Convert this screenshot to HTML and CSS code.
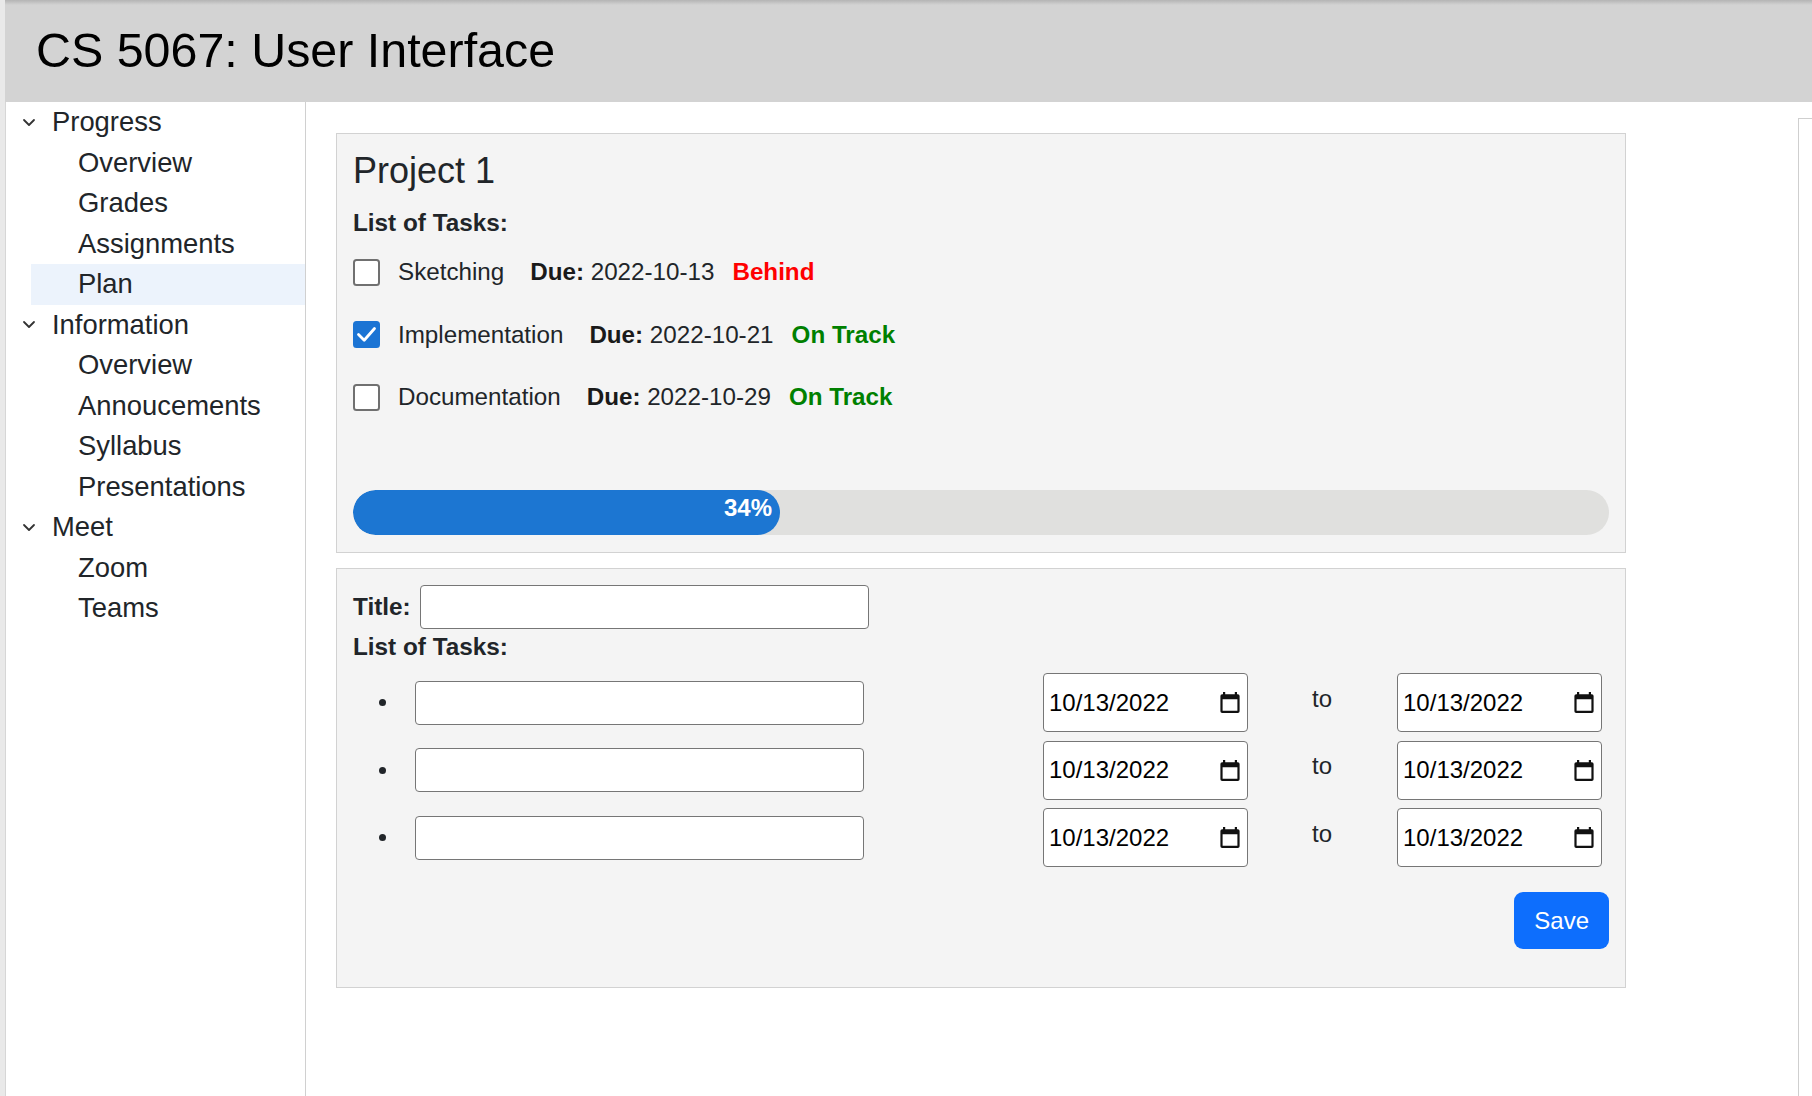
FILE: index.html
```html
<!DOCTYPE html>
<html lang="en">
<head>
<meta charset="utf-8">
<title>CS 5067: User Interface</title>
<link rel="stylesheet" href="styles.css">
</head>
<body>
<div class="app">
  <header class="topbar">
    <h1 class="site-title">CS 5067: User Interface</h1>
  </header>
  <div class="layout">
    <nav class="sidebar">
      <ul class="nav">
        <li class="group">
          <div class="group-head">
            <svg class="chev" width="14" height="9" viewBox="0 0 14 9"><polyline points="2,2 7,7 12,2" fill="none" stroke="#333" stroke-width="1.8" stroke-linecap="round" stroke-linejoin="round"/></svg>
            <span>Progress</span>
          </div>
          <ul class="sub">
            <li>Overview</li>
            <li>Grades</li>
            <li>Assignments</li>
            <li class="active">Plan</li>
          </ul>
        </li>
        <li class="group">
          <div class="group-head">
            <svg class="chev" width="14" height="9" viewBox="0 0 14 9"><polyline points="2,2 7,7 12,2" fill="none" stroke="#333" stroke-width="1.8" stroke-linecap="round" stroke-linejoin="round"/></svg>
            <span>Information</span>
          </div>
          <ul class="sub">
            <li>Overview</li>
            <li>Annoucements</li>
            <li>Syllabus</li>
            <li>Presentations</li>
          </ul>
        </li>
        <li class="group">
          <div class="group-head">
            <svg class="chev" width="14" height="9" viewBox="0 0 14 9"><polyline points="2,2 7,7 12,2" fill="none" stroke="#333" stroke-width="1.8" stroke-linecap="round" stroke-linejoin="round"/></svg>
            <span>Meet</span>
          </div>
          <ul class="sub">
            <li>Zoom</li>
            <li>Teams</li>
          </ul>
        </li>
      </ul>
    </nav>

    <main class="content">
      <section class="card project">
        <h2 class="project-title">Project 1</h2>
        <div class="section-label">List of Tasks:</div>
        <ul class="tasks">
          <li class="task">
            <span class="check"></span>
            <span class="task-name">Sketching</span>
            <span class="due"><b>Due:</b> 2022-10-13</span>
            <span class="status behind">Behind</span>
          </li>
          <li class="task">
            <span class="check checked"><svg width="27" height="27" viewBox="0 0 27 27"><polyline points="5.5,13.5 11.2,19.2 21.5,7.5" fill="none" stroke="#fff" stroke-width="2.8" stroke-linecap="round" stroke-linejoin="round"/></svg></span>
            <span class="task-name">Implementation</span>
            <span class="due"><b>Due:</b> 2022-10-21</span>
            <span class="status ontrack">On Track</span>
          </li>
          <li class="task">
            <span class="check"></span>
            <span class="task-name">Documentation</span>
            <span class="due"><b>Due:</b> 2022-10-29</span>
            <span class="status ontrack">On Track</span>
          </li>
        </ul>
        <div class="progress">
          <div class="progress-fill" style="width: 34%"><span>34%</span></div>
        </div>
      </section>

      <section class="card editor">
        <div class="title-row">
          <label class="field-label" for="title">Title:</label>
          <input class="text-input" id="title" type="text">
        </div>
        <div class="section-label tight">List of Tasks:</div>
        <ul class="edit-list">
          <li class="edit-row">
            <input class="text-input" type="text">
            <div class="date-field"><input class="date-text" type="text" value="10/13/2022"><svg class="cal" width="20" height="21" viewBox="0 0 20 21"><path fill="#111" fill-rule="evenodd" d="M3 0h2.2v2.2h9.6V0H17v2.2h0.8A1.8 1.8 0 0 1 19.6 4v15.2A1.8 1.8 0 0 1 17.8 21H2.2A1.8 1.8 0 0 1 0.4 19.2V4A1.8 1.8 0 0 1 2.2 2.2H3z M2.6 7.2v11.6h14.8V7.2z"/></svg></div>
            <span class="to">to</span>
            <div class="date-field"><input class="date-text" type="text" value="10/13/2022"><svg class="cal" width="20" height="21" viewBox="0 0 20 21"><path fill="#111" fill-rule="evenodd" d="M3 0h2.2v2.2h9.6V0H17v2.2h0.8A1.8 1.8 0 0 1 19.6 4v15.2A1.8 1.8 0 0 1 17.8 21H2.2A1.8 1.8 0 0 1 0.4 19.2V4A1.8 1.8 0 0 1 2.2 2.2H3z M2.6 7.2v11.6h14.8V7.2z"/></svg></div>
          </li>
          <li class="edit-row">
            <input class="text-input" type="text">
            <div class="date-field"><input class="date-text" type="text" value="10/13/2022"><svg class="cal" width="20" height="21" viewBox="0 0 20 21"><path fill="#111" fill-rule="evenodd" d="M3 0h2.2v2.2h9.6V0H17v2.2h0.8A1.8 1.8 0 0 1 19.6 4v15.2A1.8 1.8 0 0 1 17.8 21H2.2A1.8 1.8 0 0 1 0.4 19.2V4A1.8 1.8 0 0 1 2.2 2.2H3z M2.6 7.2v11.6h14.8V7.2z"/></svg></div>
            <span class="to">to</span>
            <div class="date-field"><input class="date-text" type="text" value="10/13/2022"><svg class="cal" width="20" height="21" viewBox="0 0 20 21"><path fill="#111" fill-rule="evenodd" d="M3 0h2.2v2.2h9.6V0H17v2.2h0.8A1.8 1.8 0 0 1 19.6 4v15.2A1.8 1.8 0 0 1 17.8 21H2.2A1.8 1.8 0 0 1 0.4 19.2V4A1.8 1.8 0 0 1 2.2 2.2H3z M2.6 7.2v11.6h14.8V7.2z"/></svg></div>
          </li>
          <li class="edit-row">
            <input class="text-input" type="text">
            <div class="date-field"><input class="date-text" type="text" value="10/13/2022"><svg class="cal" width="20" height="21" viewBox="0 0 20 21"><path fill="#111" fill-rule="evenodd" d="M3 0h2.2v2.2h9.6V0H17v2.2h0.8A1.8 1.8 0 0 1 19.6 4v15.2A1.8 1.8 0 0 1 17.8 21H2.2A1.8 1.8 0 0 1 0.4 19.2V4A1.8 1.8 0 0 1 2.2 2.2H3z M2.6 7.2v11.6h14.8V7.2z"/></svg></div>
            <span class="to">to</span>
            <div class="date-field"><input class="date-text" type="text" value="10/13/2022"><svg class="cal" width="20" height="21" viewBox="0 0 20 21"><path fill="#111" fill-rule="evenodd" d="M3 0h2.2v2.2h9.6V0H17v2.2h0.8A1.8 1.8 0 0 1 19.6 4v15.2A1.8 1.8 0 0 1 17.8 21H2.2A1.8 1.8 0 0 1 0.4 19.2V4A1.8 1.8 0 0 1 2.2 2.2H3z M2.6 7.2v11.6h14.8V7.2z"/></svg></div>
          </li>
        </ul>
        <div class="actions">
          <button class="btn-save" type="button">Save</button>
        </div>
      </section>
    </main>

    <aside class="side-panel"></aside>
  </div>
</div>
</body>
</html>
```

FILE: styles.css
```css
* {
  box-sizing: border-box;
}

html, body {
  margin: 0;
  padding: 0;
  background: #ffffff;
}

body {
  font-family: "Liberation Sans", Arial, sans-serif;
  color: #212529;
  overflow: hidden;
}

.app {
  min-height: 100vh;
  border-left: 5px solid #e9e9e9;
  display: flex;
  flex-direction: column;
}

/* Header */
.topbar {
  height: 102px;
  background: linear-gradient(to bottom, #b4b4b4 0px, #d3d3d3 5px, #d3d3d3 100%);
  padding: 22px 0 0 31px;
}

.site-title {
  margin: 0;
  font-size: 48.4px;
  line-height: 56px;
  font-weight: normal;
  color: #000;
}

/* Layout */
.layout {
  flex: 1;
  display: flex;
  align-items: stretch;
}

/* Sidebar */
.sidebar {
  width: 301px;
  flex: 0 0 301px;
  border-left: 1px solid #d6d6d6;
  border-right: 1px solid #d0d0d0;
  background: #fff;
}

.nav, .sub {
  list-style: none;
  margin: 0;
  padding: 0;
}

.nav {
  font-size: 27.4px;
  color: #212529;
}

.group-head {
  height: 40.5px;
  display: flex;
  align-items: center;
  padding-left: 16px;
}

.chev {
  display: block;
  margin-right: 16px;
  flex: 0 0 auto;
}

.sub li {
  height: 40.5px;
  line-height: 40.5px;
  margin-left: 25px;
  padding-left: 47px;
}

.sub li.active {
  background: #ecf3fc;
}

/* Main content */
.content {
  flex: 1;
  padding: 31px 0 0 30px;
}

.card {
  width: 1290px;
  background: #f4f4f4;
  border: 1px solid #d2d2d2;
  padding: 16px;
}

.project {
  padding-bottom: 17px;
  margin-bottom: 15px;
}

.project-title {
  margin: 0;
  font-size: 36px;
  line-height: 42px;
  font-weight: normal;
}

.section-label {
  margin-top: 17px;
  font-size: 24.3px;
  line-height: 28px;
  font-weight: bold;
}

.section-label.tight {
  margin-top: 4px;
}

.tasks {
  list-style: none;
  margin: 20px 0 0;
  padding: 0;
  display: flex;
  flex-direction: column;
  gap: 32.5px;
}

.task {
  height: 30px;
  display: flex;
  align-items: center;
  font-size: 24.2px;
  line-height: 30px;
}

.check {
  width: 27px;
  height: 27px;
  border: 2.5px solid #707070;
  border-radius: 3.5px;
  margin-right: 18px;
  flex: 0 0 auto;
  background: #fff;
  position: relative;
}

.check.checked {
  background: #1b74d4;
  border-color: #1b74d4;
}

.check.checked svg {
  position: absolute;
  left: -2.5px;
  top: -2.5px;
}

.task-name {
  margin-right: 26px;
}

.due b {
  font-weight: bold;
  color: #1a1a1a;
}

.status {
  margin-left: 18px;
  font-weight: bold;
}

.behind {
  color: #ff0000;
}

.ontrack {
  color: #008000;
}

.progress {
  margin-top: 78px;
  height: 45px;
  border-radius: 23px;
  background: #e0e0de;
  overflow: hidden;
}

.progress-fill {
  height: 45px;
  border-radius: 23px;
  background: #1c76d2;
  display: flex;
  align-items: center;
  justify-content: flex-end;
  padding: 0 8px 9px 0;
  color: #fff;
  font-size: 24px;
  font-weight: bold;
}

/* Editor card */
.editor {
  padding-bottom: 38px;
}

.title-row {
  display: flex;
  align-items: center;
  height: 44px;
}

.field-label {
  font-size: 24.3px;
  font-weight: bold;
  margin-right: 9px;
}

.text-input {
  width: 449px;
  height: 44px;
  border: 1px solid #767676;
  border-radius: 4px;
  background: #fff;
  font-family: "Liberation Sans", Arial, sans-serif;
  font-size: 24px;
  padding: 0 6px;
  margin: 0;
}

.edit-list {
  list-style: none;
  margin: 12px 0 0;
  padding: 0;
  display: flex;
  flex-direction: column;
  gap: 8.5px;
}

.edit-row {
  height: 59px;
  display: flex;
  align-items: center;
}

.edit-row::before {
  content: "";
  width: 7px;
  height: 7px;
  border-radius: 50%;
  background: #212529;
  margin-left: 26px;
  margin-right: 29px;
  flex: 0 0 auto;
}

.date-field {
  width: 205px;
  height: 59px;
  border: 1px solid #767676;
  border-radius: 4px;
  background: #fff;
  display: flex;
  align-items: center;
  padding: 0 7px 0 5px;
  margin-left: 179px;
}

.date-field + .to + .date-field {
  margin-left: 65px;
}

.date-text {
  flex: 1;
  min-width: 0;
  border: none;
  outline: none;
  background: transparent;
  padding: 0;
  margin: 0;
  font-family: "Liberation Sans", Arial, sans-serif;
  font-size: 24px;
  color: #000;
}

.cal {
  display: block;
  flex: 0 0 auto;
}

.to {
  margin-left: 64px;
  margin-bottom: 8px;
  font-size: 24px;
  line-height: 30px;
}

.actions {
  display: flex;
  justify-content: flex-end;
  margin-top: 25px;
}

.btn-save {
  height: 57px;
  padding: 0 20px;
  border: none;
  border-radius: 9px;
  background: #0d6efd;
  color: #fff;
  font-family: "Liberation Sans", Arial, sans-serif;
  font-size: 24px;
  line-height: 57px;
}

/* Right panel */
.side-panel {
  flex: 0 0 14px;
  width: 14px;
  margin-top: 16px;
  border-top: 1px solid #cfcfcf;
  border-left: 1px solid #cfcfcf;
}
```
